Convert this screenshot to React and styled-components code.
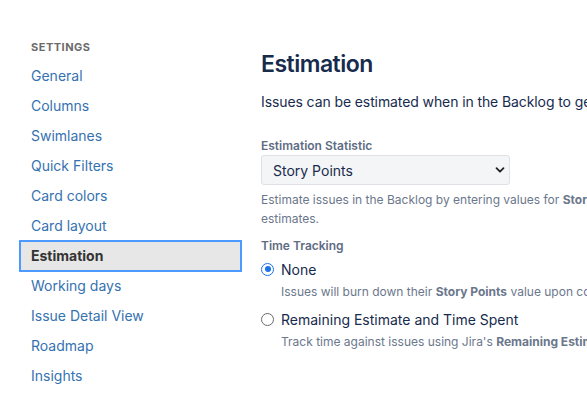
import React, { useState } from 'react';
import styled, { createGlobalStyle } from 'styled-components';

const GlobalStyle = createGlobalStyle`
    html, body {
        margin: 0;
        padding: 0;
        background: #fff;
        overflow: hidden;
        font-family: Inter, "Noto Sans", "Liberation Sans", sans-serif;
    }
`

const Page = styled.div`
    display: flex;
    align-items: flex-start;
    gap: 19px;
    padding: 38px 0 0 19px;
    width: 900px;
`

const Sidebar = styled.nav`
    width: 223px;
    flex-shrink: 0;
    display: flex;
    flex-direction: column;
`

const NavHeading = styled.div`
    padding: 0 12px;
    height: 18px;
    line-height: 18px;
    font-size: 11px;
    font-weight: 700;
    letter-spacing: 0.5px;
    text-transform: uppercase;
    color: #6b6b6b;
    margin-bottom: 5px;
`

const NavItem = styled.a`
    display: block;
    height: 30px;
    line-height: 28px;
    padding: 0 11px;
    font-size: 14px;
    text-decoration: none;
    box-sizing: border-box;
    border: 1px solid transparent;
    color: ${p => (p.$active ? '#333' : '#3572b0')};
    font-weight: ${p => (p.$active ? 700 : 400)};
    background: ${p => (p.$active ? '#e7e7e7' : 'transparent')};
    ${p => p.$active && `
        height: 32px;
        line-height: 28px;
        margin: -1px 0;
        border: 2px solid #4c9aff;
        padding: 0 10px;
    `}
`

const Main = styled.main`
    width: 620px;
    flex-shrink: 0;
    color: #172b4d;
`

const Title = styled.h1`
    margin: 10px 0 0;
    font-size: 23px;
    font-weight: 600;
    line-height: 32px;
    letter-spacing: -0.5px;
    color: #172b4d;
`

const Intro = styled.p`
    margin: 12px 0 0;
    font-size: 14px;
    line-height: 20px;
    letter-spacing: -0.1px;
    white-space: nowrap;
`

const Field = styled.div`
    margin-top: ${p => p.$top || 0}px;
`

const Label = styled.div`
    font-size: 12px;
    font-weight: 600;
    line-height: 16px;
    color: #5e6c84;
`

const SelectBox = styled.div`
    margin-top: 1px;
    width: 249px;
    height: 30px;
    box-sizing: border-box;
    border: 1px solid #dfe1e6;
    border-radius: 3px;
    background: #f4f5f7;
    display: flex;
    align-items: center;
    justify-content: space-between;
    padding: 0 4px 0 11px;
    font-size: 14px;
    color: #172b4d;
`

const Help = styled.div`
    margin-top: ${p => p.$top || 0}px;
    padding-left: ${p => p.$indent || 0}px;
    font-size: 12px;
    line-height: 19px;
    color: #6b778c;
    white-space: nowrap;
    b {
        font-weight: 700;
        color: #6b778c;
    }
`

const RadioRow = styled.label`
    display: flex;
    align-items: center;
    gap: 7px;
    height: 22px;
    margin-top: ${p => p.$top || 0}px;
    font-size: 14px;
    color: #172b4d;
    cursor: pointer;
`

const RadioDot = styled.span`
    width: 13px;
    height: 13px;
    border-radius: 50%;
    box-sizing: border-box;
    border: ${p => (p.$on ? '1.5px solid #1a73e8' : '1px solid #6b6b6b')};
    background: #fff;
    display: flex;
    align-items: center;
    justify-content: center;
    &::after {
        content: '';
        width: 6px;
        height: 6px;
        border-radius: 50%;
        background: ${p => (p.$on ? '#1a73e8' : 'transparent')};
    }
`

const Chevron = () => (
    <svg width="10" height="10" viewBox="0 0 10 10">
        <path d="M1.5 3.2 L5 6.7 L8.5 3.2" fill="none" stroke="#222" strokeWidth="1.8" strokeLinecap="round" strokeLinejoin="round" />
    </svg>
)

const navItems = [
    'General', 'Columns', 'Swimlanes', 'Quick Filters', 'Card colors', 'Card layout',
    'Estimation', 'Working days', 'Issue Detail View', 'Roadmap', 'Insights'
]

const App = () => {
    const [tracking, setTracking] = useState('none')

    return (
        <>
            <GlobalStyle />
            <Page>
                <Sidebar>
                    <NavHeading>Settings</NavHeading>
                    {navItems.map(e => (
                        <NavItem key={e} href="#" $active={e === 'Estimation'}>{e}</NavItem>
                    ))}
                </Sidebar>
                <Main>
                    <Title>Estimation</Title>
                    <Intro>Issues can be estimated when in the Backlog to get a view of the team's velocity and help plan sprints.</Intro>
                    <Field $top={26}>
                        <Label>Estimation Statistic</Label>
                        <SelectBox>
                            <span>Story Points</span>
                            <Chevron />
                        </SelectBox>
                        <Help $top={5}>
                            Estimate issues in the Backlog by entering values for <b>Story Points</b>. This field will be used to track progress and sum<br />
                            estimates.
                        </Help>
                    </Field>
                    <Field $top={10}>
                        <Label>Time Tracking</Label>
                        <RadioRow $top={4} onClick={() => setTracking('none')}>
                            <RadioDot $on={tracking === 'none'} />
                            None
                        </RadioRow>
                        <Help $top={2} $indent={20}>
                            Issues will burn down their <b>Story Points</b> value upon completion.
                        </Help>
                        <RadioRow $top={7} onClick={() => setTracking('remaining')}>
                            <RadioDot $on={tracking === 'remaining'} />
                            Remaining Estimate and Time Spent
                        </RadioRow>
                        <Help $top={2} $indent={20}>
                            Track time against issues using Jira's <b>Remaining Estimate</b> and <b>Time Spent</b> fields.
                        </Help>
                    </Field>
                </Main>
            </Page>
        </>
    );
};

export default App;
